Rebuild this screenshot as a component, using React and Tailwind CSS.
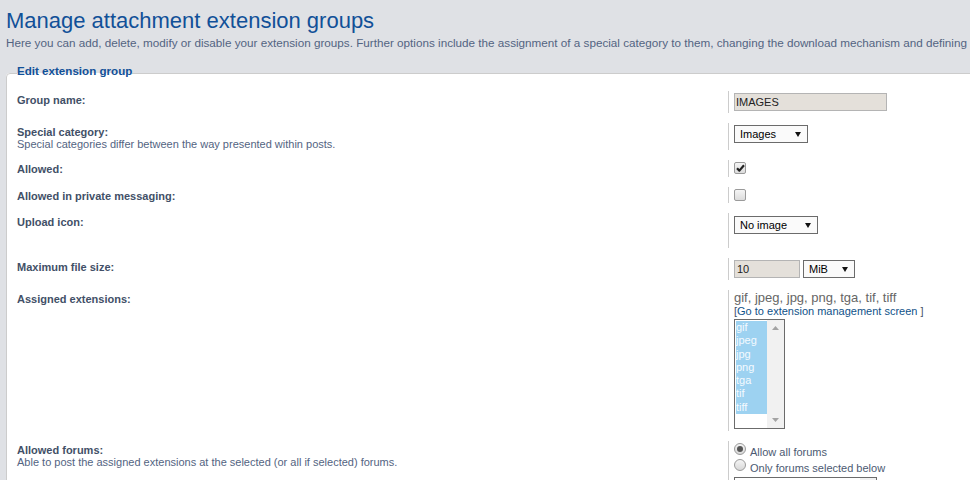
import React from "react";

function Arrow() {
  return (
    <svg width="6" height="5" viewBox="0 0 6 5" className="shrink-0">
      <path d="M0 0H6L3 5Z" fill="#111" />
    </svg>
  );
}

function Select({ value, className }) {
  return (
    <div className={`flex h-[18px] items-center justify-between border border-[#6b6b6b] bg-[#fafafa] pl-[5px] pr-[6px] text-[11px] leading-[13px] text-black ${className}`}>
      <span>{value}</span>
      <Arrow />
    </div>
  );
}

function TextInput({ value, className }) {
  return (
    <div className={`flex h-[18px] items-center border border-[#b4b4b4] bg-[#e4e0da] pl-[1px] text-[11px] leading-[13px] text-[#222] ${className}`}>
      {value}
    </div>
  );
}

function Checkbox({ checked }) {
  return (
    <div className="flex h-[12px] w-[12px] items-center justify-center rounded-[2px] border border-[#9a9a9a] bg-gradient-to-b from-[#f5f5f5] to-[#dcdcdc]">
      {checked ? (
        <svg width="9" height="8" viewBox="0 0 9 8">
          <path d="M1 4.2L3.4 6.6L8 1.2" fill="none" stroke="#222" strokeWidth="2.2" strokeLinejoin="round" />
        </svg>
      ) : null}
    </div>
  );
}

function Radio({ checked }) {
  return (
    <div className="flex h-[12px] w-[12px] shrink-0 items-center justify-center rounded-full border border-[#9a9a9a] bg-gradient-to-b from-[#f5f5f5] to-[#d8d8d8]">
      {checked ? <div className="h-[6px] w-[6px] rounded-full bg-[#555]" /> : null}
    </div>
  );
}

function Row({ height, label, desc, children, ddClass = "pt-[2px]" }) {
  return (
    <div className={`flex ${height}`}>
      <div className="w-[711px] shrink-0 pt-[3px] text-[11px] leading-[12px]">
        <div className="font-bold text-[#425067]">{label}</div>
        {desc ? <div className="text-[#536482]">{desc}</div> : null}
      </div>
      <div className={`flex-1 border-l border-[#cccccc] pl-[5px] ${ddClass}`}>{children}</div>
    </div>
  );
}

const extensions = ["gif", "jpeg", "jpg", "png", "tga", "tif", "tiff"];

export default function App() {
  return (
    <div className="h-[480px] w-[970px] overflow-hidden bg-[#dfe1e5] font-['Liberation_Sans',Arial,sans-serif]">
      <div className="w-[1620px] pl-[6px]">
        <h1 className="mt-[8px] text-[22px] leading-[26px] text-[#115098]">Manage attachment extension groups</h1>
        <p className="mt-[2px] whitespace-nowrap text-[11.7px] leading-[14px] text-[#536482]">
          Here you can add, delete, modify or disable your extension groups. Further options include the assignment of a special category to them, changing the download mechanism and defining an upload icon which will be displayed in front of the attachment.
        </p>

        <fieldset className="mt-[14px] rounded-[4px] border border-[#cccccc] bg-white px-[10px] pt-[8px]">
          <legend className="pb-[6px] text-[11.6px] font-bold leading-[13px] text-[#115098]">Edit extension group</legend>

          <div className="flex flex-col gap-[10px]">
            <Row height="h-[22px]" label="Group name:">
              <TextInput value="IMAGES" className="w-[153px]" />
            </Row>

            <Row height="h-[27px]" label="Special category:" desc="Special categories differ between the way presented within posts.">
              <Select value="Images" className="w-[74px]" />
            </Row>

            <Row height="h-[17px]" label="Allowed:">
              <Checkbox checked />
            </Row>

            <Row height="h-[16px]" label="Allowed in private messaging:">
              <Checkbox />
            </Row>

            <Row height="h-[35px]" label="Upload icon:" ddClass="pt-[3px]">
              <Select value="No image" className="w-[84px]" />
            </Row>

            <Row height="h-[22px]" label="Maximum file size:">
              <div className="flex gap-[3px]">
                <TextInput value="10" className="w-[66px] pl-[2px]" />
                <Select value="MiB" className="w-[52px]" />
              </div>
            </Row>

            <Row height="h-[141px]" label="Assigned extensions:" ddClass="pt-0">
              <div className="pt-[1px] text-[13px] leading-[14px] text-[#666]">gif, jpeg, jpg, png, tga, tif, tiff</div>
              <div className="text-[11px] leading-[13px] text-[#425067]">
                [<a className="text-[#105289]">Go to extension management screen</a> ]
              </div>
              <div className="mt-[1px] flex h-[110px] w-[51px] border border-[#6b6b6b] bg-white">
                <div className="w-[32px] pl-[1px] pt-[1px]">
                  <div className="bg-[#9dd2f1]">
                    {extensions.map((ext) => (
                      <div key={ext} className="h-[13.3px] text-[11px] leading-[13.3px] text-[#f4faff]">
                        {ext}
                      </div>
                    ))}
                  </div>
                </div>
                <div className="flex flex-1 flex-col items-center justify-between bg-[#f1f1f1] py-[6px]">
                  <svg width="7" height="4" viewBox="0 0 7 4">
                    <path d="M0 4L3.5 0L7 4Z" fill="#a3a3a3" />
                  </svg>
                  <svg width="7" height="4" viewBox="0 0 7 4">
                    <path d="M0 0H7L3.5 4Z" fill="#a3a3a3" />
                  </svg>
                </div>
              </div>
            </Row>

            <Row height="h-[120px]" label="Allowed forums:" desc="Able to post the assigned extensions at the selected (or all if selected) forums.">
              <div className="flex gap-[4px]">
                <Radio checked />
                <span className="mt-[3px] text-[11px] leading-[13px] text-[#4c5a72]">Allow all forums</span>
              </div>
              <div className="flex gap-[4px]">
                <Radio />
                <span className="mt-[3px] text-[11px] leading-[13px] text-[#4c5a72]">Only forums selected below</span>
              </div>
              <div className="mt-[2px] flex h-[80px] w-[143px] border border-[#6b6b6b] bg-white">
                <div className="flex-1" />
                <div className="w-[16px] bg-[#f1f1f1]" />
              </div>
            </Row>
          </div>
        </fieldset>
      </div>
    </div>
  );
}
